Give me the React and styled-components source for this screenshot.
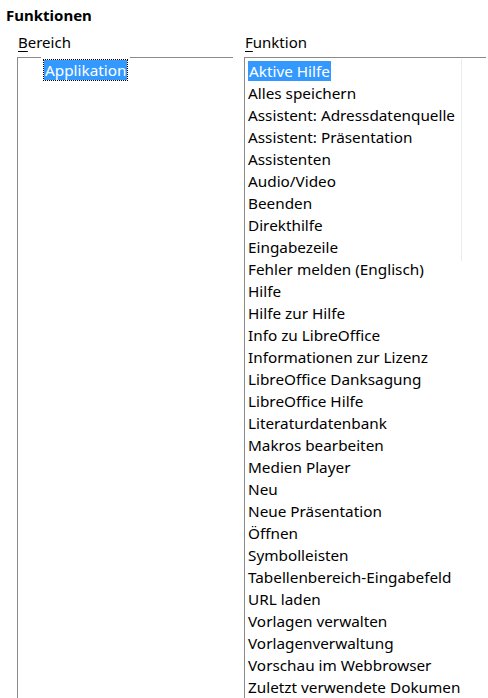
import React from 'react';
import styled, { createGlobalStyle } from 'styled-components';

const Global = createGlobalStyle`
  html, body {
    margin: 0;
    padding: 0;
    background: #fff;
    overflow: hidden;
  }
  body {
    font-family: "Noto Sans", "Open Sans", sans-serif;
    color: #000;
  }
`;

const Page = styled.div`
  width: 488px;
  height: 698px;
  overflow: hidden;
  padding: 4px 0 0 6px;
  box-sizing: border-box;
`;

const Title = styled.div`
  font-weight: bold;
  font-size: 15px;
  line-height: 22px;
`;

const Columns = styled.div`
  display: grid;
  grid-template-columns: 216px 242px;
  column-gap: 11px;
  margin-left: 11px;
  margin-top: 6px;
`;

const Column = styled.div`
  display: flex;
  flex-direction: column;
`;

const Label = styled.div`
  font-size: 15px;
  line-height: 20px;
  padding-left: 1px;
  margin-bottom: 5px;

  u {
    text-decoration-thickness: 1px;
    text-underline-offset: 3px;
  }
`;

const Box = styled.div`
  border-top: 1px solid #8a8a8a;
  border-left: 1px solid #8a8a8a;
  height: 660px;
  box-sizing: border-box;
`;

const TreeRow = styled.div`
  margin: -1px 0 0 23px;
  padding: 2px 3px 2px 3px;
  background: #fff;
  display: inline-block;
`;

const Selected = styled.span`
  display: inline-block;
  background: #3399ff;
  color: #fff;
  font-size: 15.3px;
  line-height: 20px;
  padding: 0 1px;
  outline: ${p => (p.focus ? '1px dotted #000' : 'none')};
`;

const ListBox = styled(Box)`
  padding: 2px 0 0 1px;
  position: relative;
`;

const Item = styled.div`
  font-size: 15.3px;
  line-height: 22px;
  height: 22px;
  white-space: nowrap;
  padding-left: 2px;
`;

const ScrollEdge = styled.div`
  position: absolute;
  left: 216px;
  top: 1px;
  width: 1px;
  height: 202px;
  background: #ececec;
`;

const functions = [
  'Alles speichern',
  'Assistent: Adressdatenquelle',
  'Assistent: Präsentation',
  'Assistenten',
  'Audio/Video',
  'Beenden',
  'Direkthilfe',
  'Eingabezeile',
  'Fehler melden (Englisch)',
  'Hilfe',
  'Hilfe zur Hilfe',
  'Info zu LibreOffice',
  'Informationen zur Lizenz',
  'LibreOffice Danksagung',
  'LibreOffice Hilfe',
  'Literaturdatenbank',
  'Makros bearbeiten',
  'Medien Player',
  'Neu',
  'Neue Präsentation',
  'Öffnen',
  'Symbolleisten',
  'Tabellenbereich-Eingabefeld',
  'URL laden',
  'Vorlagen verwalten',
  'Vorlagenverwaltung',
  'Vorschau im Webbrowser',
  'Zuletzt verwendete Dokumen',
];

export default function App() {
  return (
    <Page>
      <Global />
      <Title>Funktionen</Title>
      <Columns>
        <Column>
          <Label><u>B</u>ereich</Label>
          <Box>
            <TreeRow>
              <Selected focus>Applikation</Selected>
            </TreeRow>
          </Box>
        </Column>
        <Column>
          <Label><u>F</u>unktion</Label>
          <ListBox>
            <ScrollEdge />
            <Item><Selected>Aktive Hilfe</Selected></Item>
            {functions.map(f => <Item key={f}>{f}</Item>)}
          </ListBox>
        </Column>
      </Columns>
    </Page>
  );
}
